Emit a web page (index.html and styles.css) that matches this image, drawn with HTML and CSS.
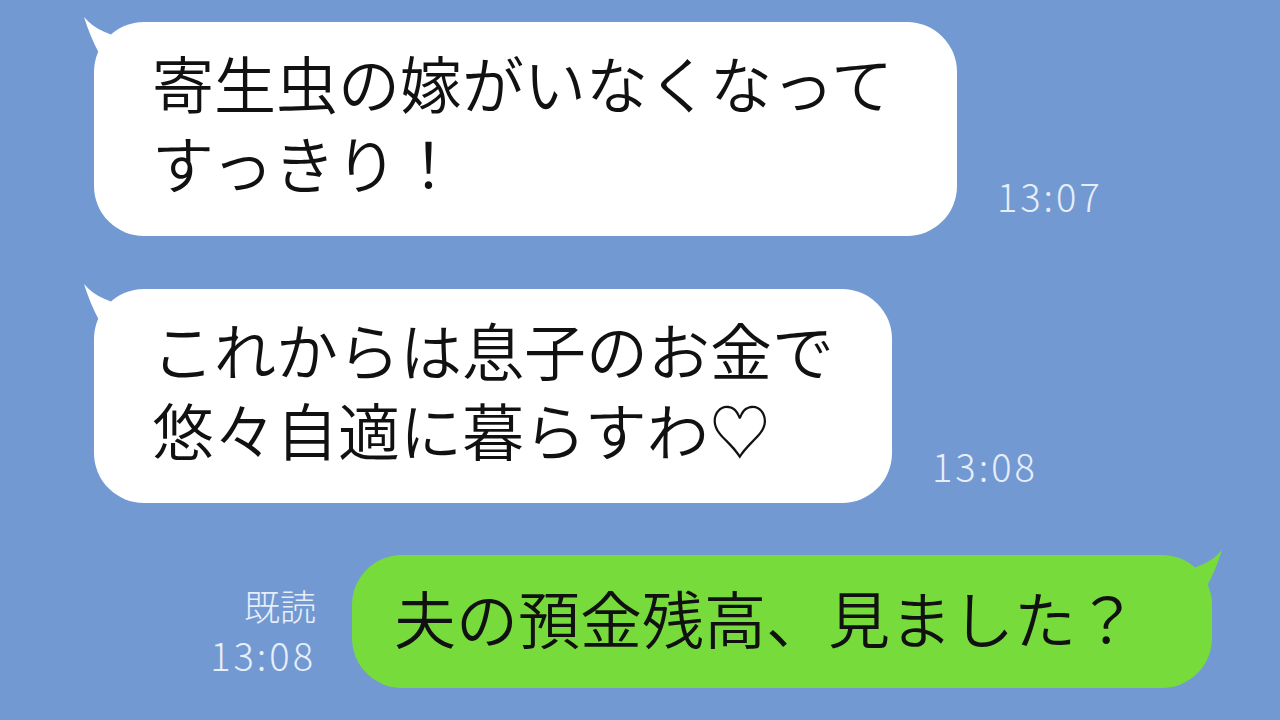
FILE: index.html
```html
<html lang="ja">
<head>
	<meta charset="UTF-8">
	<meta name="viewport" content="width=device-width, initial-scale=1.0">
	<title>chat</title>
	<link rel="stylesheet" href="styles.css">
</head>
<body>
	<div class="talk">
		<div class="row">
			<div class="bubble white first">
				<svg class="tail" viewBox="0 0 60 60" width="60" height="60"><path d="M4,3 C8,16 13,28 20,41 L40,46 L50,26 C30,21 15,16 4,3 Z"/></svg>
				寄生虫の嫁がいなくなって<br>すっきり！
			</div>
			<div class="time t1">13:07</div>
		</div>
		<div class="row second">
			<div class="bubble white">
				<svg class="tail" viewBox="0 0 60 60" width="60" height="60"><path d="M4,3 C8,16 13,28 20,41 L40,46 L50,26 C30,21 15,16 4,3 Z"/></svg>
				これからは息子のお金で<br>悠々自適に暮らすわ♡
			</div>
			<div class="time t2">13:08</div>
		</div>
		<div class="row mine">
			<div class="meta">
				<div>既読</div>
				<div class="num">13:08</div>
			</div>
			<div class="bubble green">
				<svg class="tail" viewBox="0 0 60 60" width="60" height="60"><path d="M4,3 C8,16 13,28 20,41 L40,46 L50,26 C30,21 15,16 4,3 Z"/></svg>
				夫の預金残高、見ました？
			</div>
		</div>
	</div>
</body>
</html>
```
FILE: styles.css
```css
*{
	margin: 0;
	padding: 0;
	box-sizing: border-box;
}
body{
	width: 1280px;
	height: 720px;
	overflow: hidden;
	background-color: #7399d3;
	font-family: "Noto Sans CJK JP", "Noto Sans", sans-serif;
}
.talk{
	padding: 22px 68px 0 94px;
}
.row{
	display: flex;
	align-items: flex-end;
}
.second{
	margin-top: 53px;
}
.mine{
	margin-top: 52px;
	justify-content: flex-end;
}
.bubble{
	position: relative;
	font-size: 62px;
	font-weight: 350;
	line-height: 80px;
	color: #111;
	border-radius: 50px;
	padding: 20px 58px 34px 58px;
	white-space: nowrap;
}
.first{
	padding-right: 64px;
}
.white{
	background-color: #fff;
}
.green{
	background-color: #77db3c;
	padding: 22px 74px 31px 42px;
}
.tail{
	position: absolute;
	left: -14px;
	top: -8px;
	fill: #fff;
}
.green .tail{
	left: auto;
	right: -14px;
	top: -8px;
	fill: #77db3c;
	transform: scaleX(-1);
}
.time{
	font-size: 38px;
	line-height: 46px;
	color: #e6eef9;
	font-weight: 300;
	letter-spacing: 3px;
	margin-left: 40px;
}
.t1{
	margin-bottom: 17px;
}
.t2{
	margin-bottom: 14px;
}
.meta{
	text-align: right;
	font-size: 36px;
	line-height: 50px;
	color: #e6eef9;
	font-weight: 300;
	margin-right: 36px;
	margin-bottom: 8px;
}
.num{
	font-size: 38px;
	letter-spacing: 3px;
}
```
